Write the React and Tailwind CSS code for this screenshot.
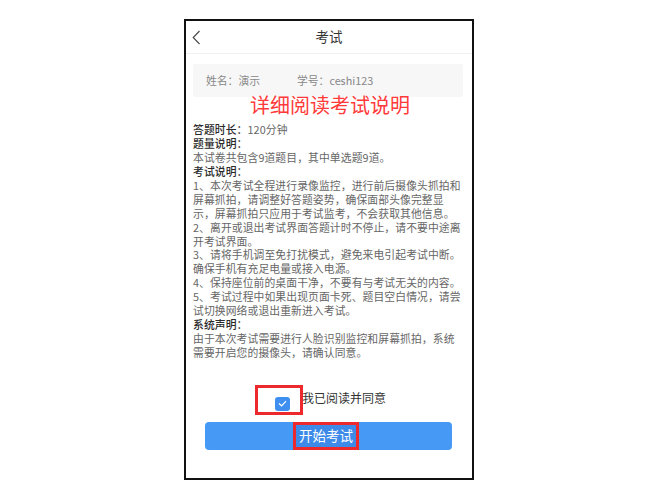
import React from "react";

const lines = [
  { label: "答题时长：", text: "120分钟" },
  { label: "题量说明：" },
  { text: "本试卷共包含9道题目，其中单选题9道。" },
  { label: "考试说明：" },
  { text: "1、本次考试全程进行录像监控，进行前后摄像头抓拍和" },
  { text: "屏幕抓拍，请调整好答题姿势，确保面部头像完整显" },
  { text: "示，屏幕抓拍只应用于考试监考，不会获取其他信息。" },
  { text: "2、离开或退出考试界面答题计时不停止，请不要中途离" },
  { text: "开考试界面。" },
  { text: "3、请将手机调至免打扰模式，避免来电引起考试中断。" },
  { text: "确保手机有充足电量或接入电源。" },
  { text: "4、保持座位前的桌面干净，不要有与考试无关的内容。" },
  { text: "5、考试过程中如果出现页面卡死、题目空白情况，请尝" },
  { text: "试切换网络或退出重新进入考试。" },
  { label: "系统声明：" },
  { text: "由于本次考试需要进行人脸识别监控和屏幕抓拍，系统" },
  { text: "需要开启您的摄像头，请确认同意。" },
];

export default function App() {
  return (
    <div className="w-[657px] h-[497px] bg-white overflow-hidden font-['Noto_Sans_CJK_SC','Noto_Sans',sans-serif]">
      <div className="ml-[184px] mt-[19px] w-[290px] h-[461px] border-2 border-[#111] bg-white flex flex-col">
        {/* header */}
        <div className="h-[33px] border-b border-[#f0f0f0] flex items-center relative shrink-0">
          <svg className="ml-[6px]" width="9" height="15" viewBox="0 0 9 15" fill="none">
            <polyline points="7.5,1 1.2,7.5 7.5,14" stroke="#444" strokeWidth="1.1" strokeLinejoin="miter" />
          </svg>
          <div className="absolute inset-0 flex items-center justify-center text-[13.5px] text-[#333] leading-none">考试</div>
        </div>

        {/* info box */}
        <div className="mt-[10px] ml-[7px] w-[270px] h-[33px] bg-[#f7f7f7] rounded-[2px] flex items-center text-[10.8px] text-[#888] leading-none shrink-0">
          <span className="ml-[13px] w-[91px]">姓名：演示</span>
          <span>学号：ceshi123</span>
        </div>

        {/* red annotation heading */}
        <div className="mt-[-2px] h-[20px] leading-[20px] text-[20px] text-[#ff3a3a] text-center pl-[2px] shrink-0">
          详细阅读考试说明
        </div>

        {/* body */}
        <div className="mt-[8px] pl-[7px] text-[10.8px] leading-[13.94px] tracking-[0.1px] text-[#666] whitespace-nowrap">
          {lines.map((l, i) => (
            <div key={i}>
              {l.label && <span className="text-[#2a2a2a] font-medium">{l.label}</span>}
              {l.text && <span>{l.text}</span>}
            </div>
          ))}
        </div>

        {/* agree row */}
        <div className="mt-[25px] ml-[69px] flex items-center shrink-0">
          <div className="w-[48px] h-[30px] border-[3px] border-[#ec2a2e] pt-[9px] pl-[17px]">
            <div className="w-[15px] h-[14px] rounded-[3px] bg-[#3f8ff0] flex items-center justify-center">
              <svg width="9" height="7" viewBox="0 0 9 7" fill="none">
                <polyline points="1,3.5 3.6,5.8 8,1.2" stroke="#fff" strokeWidth="1.2" />
              </svg>
            </div>
          </div>
          <span className="ml-[-1px] text-[12px] text-[#333] leading-none mt-[-3px]">我已阅读并同意</span>
        </div>

        {/* start button */}
        <div className="mt-[7px] ml-[19px] w-[247px] h-[28px] rounded-[4px] bg-[#4799f6] flex justify-center shrink-0">
          <div className="ml-[-5px] w-[66px] h-[28px] border-[3px] border-[#ec2a2e] bg-[#3d8ae8] flex items-center justify-center text-[13.5px] text-white leading-none">
            开始考试
          </div>
        </div>
      </div>
    </div>
  );
}
